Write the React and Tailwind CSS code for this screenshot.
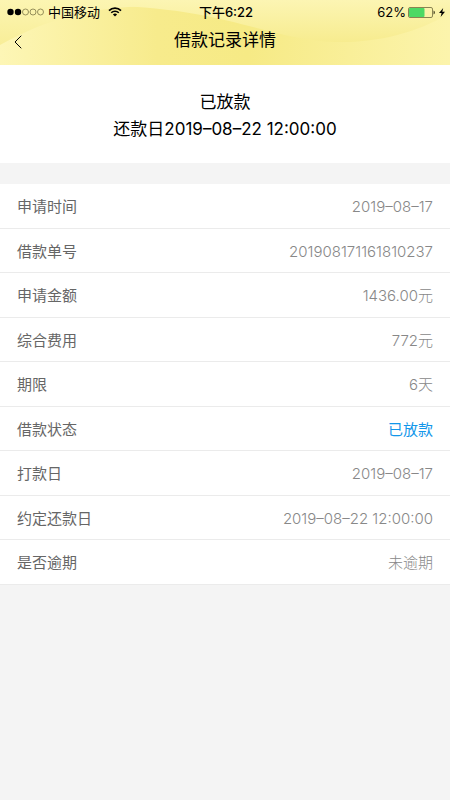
import { ChevronLeft } from 'lucide-react';
import clsx from 'clsx';

const records = [
  { label: '申请时间', value: '2019–08–17' },
  { label: '借款单号', value: '201908171161810237' },
  { label: '申请金额', value: '1436.00元' },
  { label: '综合费用', value: '772元' },
  { label: '期限', value: '6天' },
  { label: '借款状态', value: '已放款', active: true },
  { label: '打款日', value: '2019–08–17' },
  { label: '约定还款日', value: '2019–08–22 12:00:00' },
  { label: '是否逾期', value: '未逾期' },
];

const HeaderBackground = () => (
  <svg
    className="absolute inset-0 w-full h-full"
    viewBox="0 0 450 65"
    preserveAspectRatio="none"
    aria-hidden="true"
  >
    <defs>
      <linearGradient id="base" x1="0" x2="1" y1="0" y2="0">
        <stop offset="0" stopColor="#fdf6b6" />
        <stop offset="0.35" stopColor="#f7eb8c" />
        <stop offset="0.55" stopColor="#f6ea85" />
        <stop offset="1" stopColor="#fcf4ac" />
      </linearGradient>
      <linearGradient id="corner" x1="0" x2="0" y1="0" y2="1">
        <stop offset="0" stopColor="#fcf5b2" />
        <stop offset="1" stopColor="#f8ee98" />
      </linearGradient>
      <linearGradient id="wave" x1="0" x2="0" y1="0" y2="1">
        <stop offset="0" stopColor="#fcf5b3" />
        <stop offset="1" stopColor="#f7ec8f" />
      </linearGradient>
    </defs>
    <rect width="450" height="65" fill="url(#base)" />
    <path d="M0 0H180V7C110 3 55 14 0 45Z" fill="url(#corner)" />
    <path d="M110 0H450V13C415 34 375 43 335 42C270 40 225 8 110 6Z" fill="url(#wave)" />
  </svg>
);

const StatusBar = () => (
  <div className="relative grid grid-cols-[1fr_auto_1fr] items-center h-6 pl-[7px] pr-[5px] text-[13px] leading-6">
    <div className="flex items-center gap-1">
      <svg width="37" height="8" viewBox="0 0 37 8" aria-hidden="true">
        <circle cx="3.5" cy="4" r="3.2" />
        <circle cx="11" cy="4" r="3.2" />
        <g fill="none" stroke="#7d7747" strokeWidth="0.8">
          <circle cx="18.5" cy="4" r="3" />
          <circle cx="26" cy="4" r="3" />
          <circle cx="33.5" cy="4" r="3" />
        </g>
      </svg>
      <span>中国移动</span>
      <svg className="ml-1" width="14" height="10" viewBox="0 0 14 10" fill="none" stroke="black" aria-hidden="true">
        <path d="M1 3.6A8.5 8.5 0 0 1 13 3.6" strokeWidth="1.7" />
        <path d="M3.2 5.8A5.4 5.4 0 0 1 10.8 5.8" strokeWidth="1.6" />
        <path d="M7 9.6L4.9 7.5A3 3 0 0 1 9.1 7.5Z" fill="black" stroke="none" />
      </svg>
    </div>
    <time className="font-medium">下午6:22</time>
    <div className="flex items-center justify-end gap-1">
      <div className="flex items-center gap-0.5">
        <span>62%</span>
        <svg width="27" height="11" viewBox="0 0 27 11" aria-hidden="true">
          <rect x="0.5" y="0.5" width="24" height="10" rx="1.5" fill="none" stroke="#8a8352" />
          <rect x="1" y="1" width="15.5" height="9" rx="1" fill="#4cd964" />
          <path d="M25.5 3.5Q27 4 27 5.5T25.5 7.5Z" fill="#55502c" />
        </svg>
      </div>
      <svg width="6" height="9" viewBox="0 0 6 9" aria-hidden="true">
        <path d="M4.2 0L0 5.1H2.6L1.6 9L6 3.7H3.3Z" />
      </svg>
    </div>
  </div>
);

const RecordRow = ({ label, value, active }) => (
  <div className="flex items-center justify-between odd:h-[45px] even:h-[44px] pt-[3px] px-[17px] bg-white border-b border-[#ebebeb] text-[15px]">
    <dt className="text-[#666666]">{label}</dt>
    <dd className={clsx(active ? 'text-[#1296ea]' : 'font-light text-[#888888]')}>{value}</dd>
  </div>
);

export default function App() {
  return (
    <div className="min-h-screen bg-[#f4f4f4] text-black font-['Inter','Noto_Sans_CJK_SC',sans-serif]">
      <header className="relative">
        <HeaderBackground />
        <StatusBar />
        <div className="relative grid grid-cols-[1fr_auto_1fr] items-start h-[41px]">
          <button type="button" aria-label="返回" className="w-9 h-9 flex items-center justify-center">
            <ChevronLeft className="w-6 h-6" strokeWidth={1} />
          </button>
          <h1 className="text-[17px] leading-8">借款记录详情</h1>
        </div>
      </header>

      <section className="pt-6 pb-5 mb-[21px] bg-white text-center text-[17px] leading-[27px]">
        <p>已放款</p>
        <p>还款日2019–08–22 12:00:00</p>
      </section>

      <dl>
        {records.map((record) => (
          <RecordRow key={record.label} {...record} />
        ))}
      </dl>
    </div>
  );
}
